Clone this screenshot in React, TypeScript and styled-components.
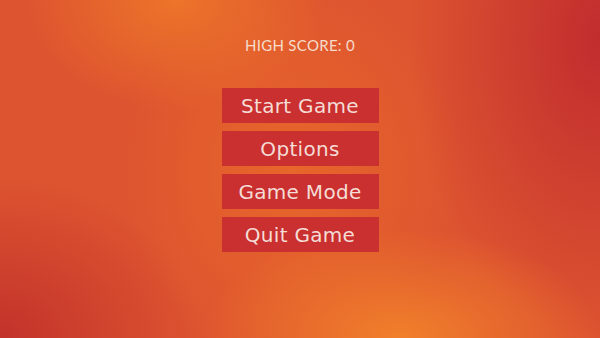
import styled, { createGlobalStyle } from "styled-components";

const GlobalStyle = createGlobalStyle`
  html, body {
    margin: 0;
    padding: 0;
    width: 100%;
    height: 100%;
    overflow: hidden;
  }
`;

const Screen = styled.main`
  width: 600px;
  height: 338px;
  box-sizing: border-box;
  padding-top: 36px;
  display: flex;
  flex-direction: column;
  align-items: center;
  font-family: "Lato", "Open Sans", sans-serif;
  background:
    radial-gradient(ellipse 150px 110px at 175px 0px, rgba(240, 122, 40, 0.85), rgba(240, 122, 40, 0) 100%),
    radial-gradient(ellipse 200px 110px at 400px 338px, rgba(242, 130, 42, 0.95), rgba(242, 130, 42, 0) 100%),
    radial-gradient(ellipse 170px 200px at 290px 170px, rgba(236, 110, 40, 0.7), rgba(236, 110, 40, 0) 100%),
    radial-gradient(ellipse 190px 300px at 600px 40px, rgba(190, 40, 46, 0.9), rgba(190, 40, 46, 0) 100%),
    radial-gradient(ellipse 200px 160px at 0px 338px, rgba(190, 44, 42, 0.85), rgba(190, 44, 42, 0) 100%),
    #dd5430;
`;

const HighScore = styled.div`
  color: #f6dccb;
  font-size: 15px;
  line-height: 18px;
  letter-spacing: 0.3px;
  margin-bottom: 34px;
`;

const Menu = styled.nav`
  display: flex;
  flex-direction: column;
  gap: 8px;
`;

const MenuButton = styled.button`
  width: 157px;
  height: 35px;
  border: none;
  padding: 0;
  background: #c9302f;
  color: #f5dcd6;
  font-family: "DejaVu Sans", "Lato", sans-serif;
  font-size: 20px;
  font-weight: 400;
  letter-spacing: 0.3px;
  cursor: pointer;
  display: flex;
  align-items: center;
  justify-content: center;
`;

const items = ["Start Game", "Options", "Game Mode", "Quit Game"];

export default function App() {
  return (
    <>
      <GlobalStyle />
      <Screen>
        <HighScore>HIGH SCORE: 0</HighScore>
        <Menu>
          {items.map((label) => (
            <MenuButton key={label}>{label}</MenuButton>
          ))}
        </Menu>
      </Screen>
    </>
  );
}
